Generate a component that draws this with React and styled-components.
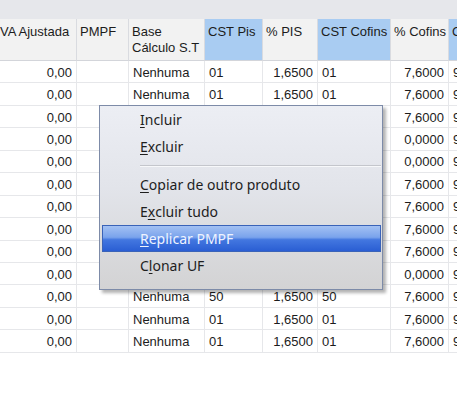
import React from 'react'
import styled, { createGlobalStyle } from 'styled-components'

const GlobalStyle = createGlobalStyle`
  html, body {
    margin: 0;
    padding: 0;
    background: #ffffff;
  }
`

const Page = styled.div`
  position: relative;
  width: 457px;
  height: 404px;
  overflow: hidden;
  background: #ffffff;
  font-family: 'Liberation Sans', Arial, sans-serif;
  font-size: 13px;
  color: #1c1c1c;
`

const TopBand = styled.div`
  height: 19px;
  background: #e6e7eb;
`

const Grid = styled.div`
  display: grid;
  grid-template-columns: 77px 52px 76px 58px 55px 73px 58px 60px;
  width: 509px;
`

const HeadCell = styled.div`
  height: 42px;
  box-sizing: border-box;
  padding: 5px 3px 0 ${({ $first }) => ($first ? '0' : '3px')};
  line-height: 16px;
  white-space: nowrap;
  overflow: hidden;
  background: ${({ $sel }) => ($sel ? '#a9ccf2' : '#f2f2f2')};
  border-right: 1px solid #d9dbe0;
  border-bottom: 1px solid #d3d5da;
`

const Cell = styled.div`
  height: 22.45px;
  box-sizing: border-box;
  display: flex;
  align-items: center;
  justify-content: ${({ $right }) => ($right ? 'flex-end' : 'flex-start')};
  padding: 1px ${({ $right }) => ($right ? '4px' : '3px')} 0 4px;
  white-space: nowrap;
  overflow: hidden;
  border-right: 1px solid #e6e7ea;
  border-bottom: 1px solid #e6e7ea;
`

const Menu = styled.div`
  position: absolute;
  left: 99px;
  top: 105px;
  width: 284px;
  box-sizing: border-box;
  padding: 0 1px 10px 2px;
  border: 1px solid #7d8ba8;
  background: linear-gradient(to bottom, #eceef4 0%, #e2e4ea 45%, #d3d3d4 100%);
  box-shadow: 3px 3px 3px rgba(0, 0, 0, 0.3);
  font-family: 'Noto Sans', 'Open Sans', sans-serif;
  font-size: 14px;
`

const Item = styled.div`
  height: 27px;
  box-sizing: border-box;
  display: flex;
  align-items: center;
  padding-left: 37px;
  border: 1px solid transparent;
  color: ${({ $active }) => ($active ? '#eef3ff' : '#1e1e1e')};
  background: ${({ $active }) =>
    $active
      ? 'linear-gradient(to bottom, #a3c1f3 0%, #7aa3ec 45%, #4377e0 55%, #2a5ed3 100%)'
      : 'transparent'};
  border-color: ${({ $active }) => ($active ? '#3a63b8' : 'transparent')};

  u {
    text-decoration-thickness: 1px;
    text-underline-offset: 2px;
  }
`

const Separator = styled.div`
  height: 11px;
  display: flex;
  align-items: center;
  padding-left: 38px;

  &::after {
    content: '';
    flex: 1;
    height: 1px;
    background: #c4c6cc;
    box-shadow: 0 1px 0 #f7f8fa;
  }
`

const headers = [
  { label: 'VA Ajustada', first: true },
  { label: 'PMPF' },
  { label: 'Base\nCálculo S.T' },
  { label: 'CST Pis', sel: true },
  { label: '% PIS' },
  { label: 'CST Cofins', sel: true },
  { label: '% Cofins' },
  { label: 'CST', sel: true },
]

const cofins = [
  '7,6000', '7,6000', '7,6000', '0,0000', '0,0000', '7,6000', '7,6000',
  '7,6000', '7,6000', '0,0000', '7,6000', '7,6000', '7,6000',
]
const cst = ['01', '01', '01', '01', '01', '01', '01', '01', '01', '01', '50', '01', '01']

const rows = cofins.map((c, i) => [
  { v: '0,00', right: true },
  { v: '' },
  { v: 'Nenhuma' },
  { v: cst[i] },
  { v: '1,6500', right: true },
  { v: cst[i] },
  { v: c, right: true },
  { v: '99' },
])

const App = () => (
  <Page>
    <GlobalStyle />
    <TopBand />
    <Grid>
      {headers.map((h, i) => (
        <HeadCell key={i} $sel={h.sel} $first={h.first}>
          {h.label.split('\n').map((l, j) => (
            <div key={j}>{l}</div>
          ))}
        </HeadCell>
      ))}
      {rows.map((r, i) =>
        r.map((c, j) => (
          <Cell key={i + '-' + j} $right={c.right}>
            {c.v}
          </Cell>
        ))
      )}
    </Grid>
    <Menu>
      <Item><u>I</u>ncluir</Item>
      <Item><u>E</u>xcluir</Item>
      <Separator />
      <Item><u>C</u>opiar de outro produto</Item>
      <Item>E<u>x</u>cluir tudo</Item>
      <Item $active><u>R</u>eplicar PMPF</Item>
      <Item>C<u>l</u>onar UF</Item>
    </Menu>
  </Page>
)

export default App
